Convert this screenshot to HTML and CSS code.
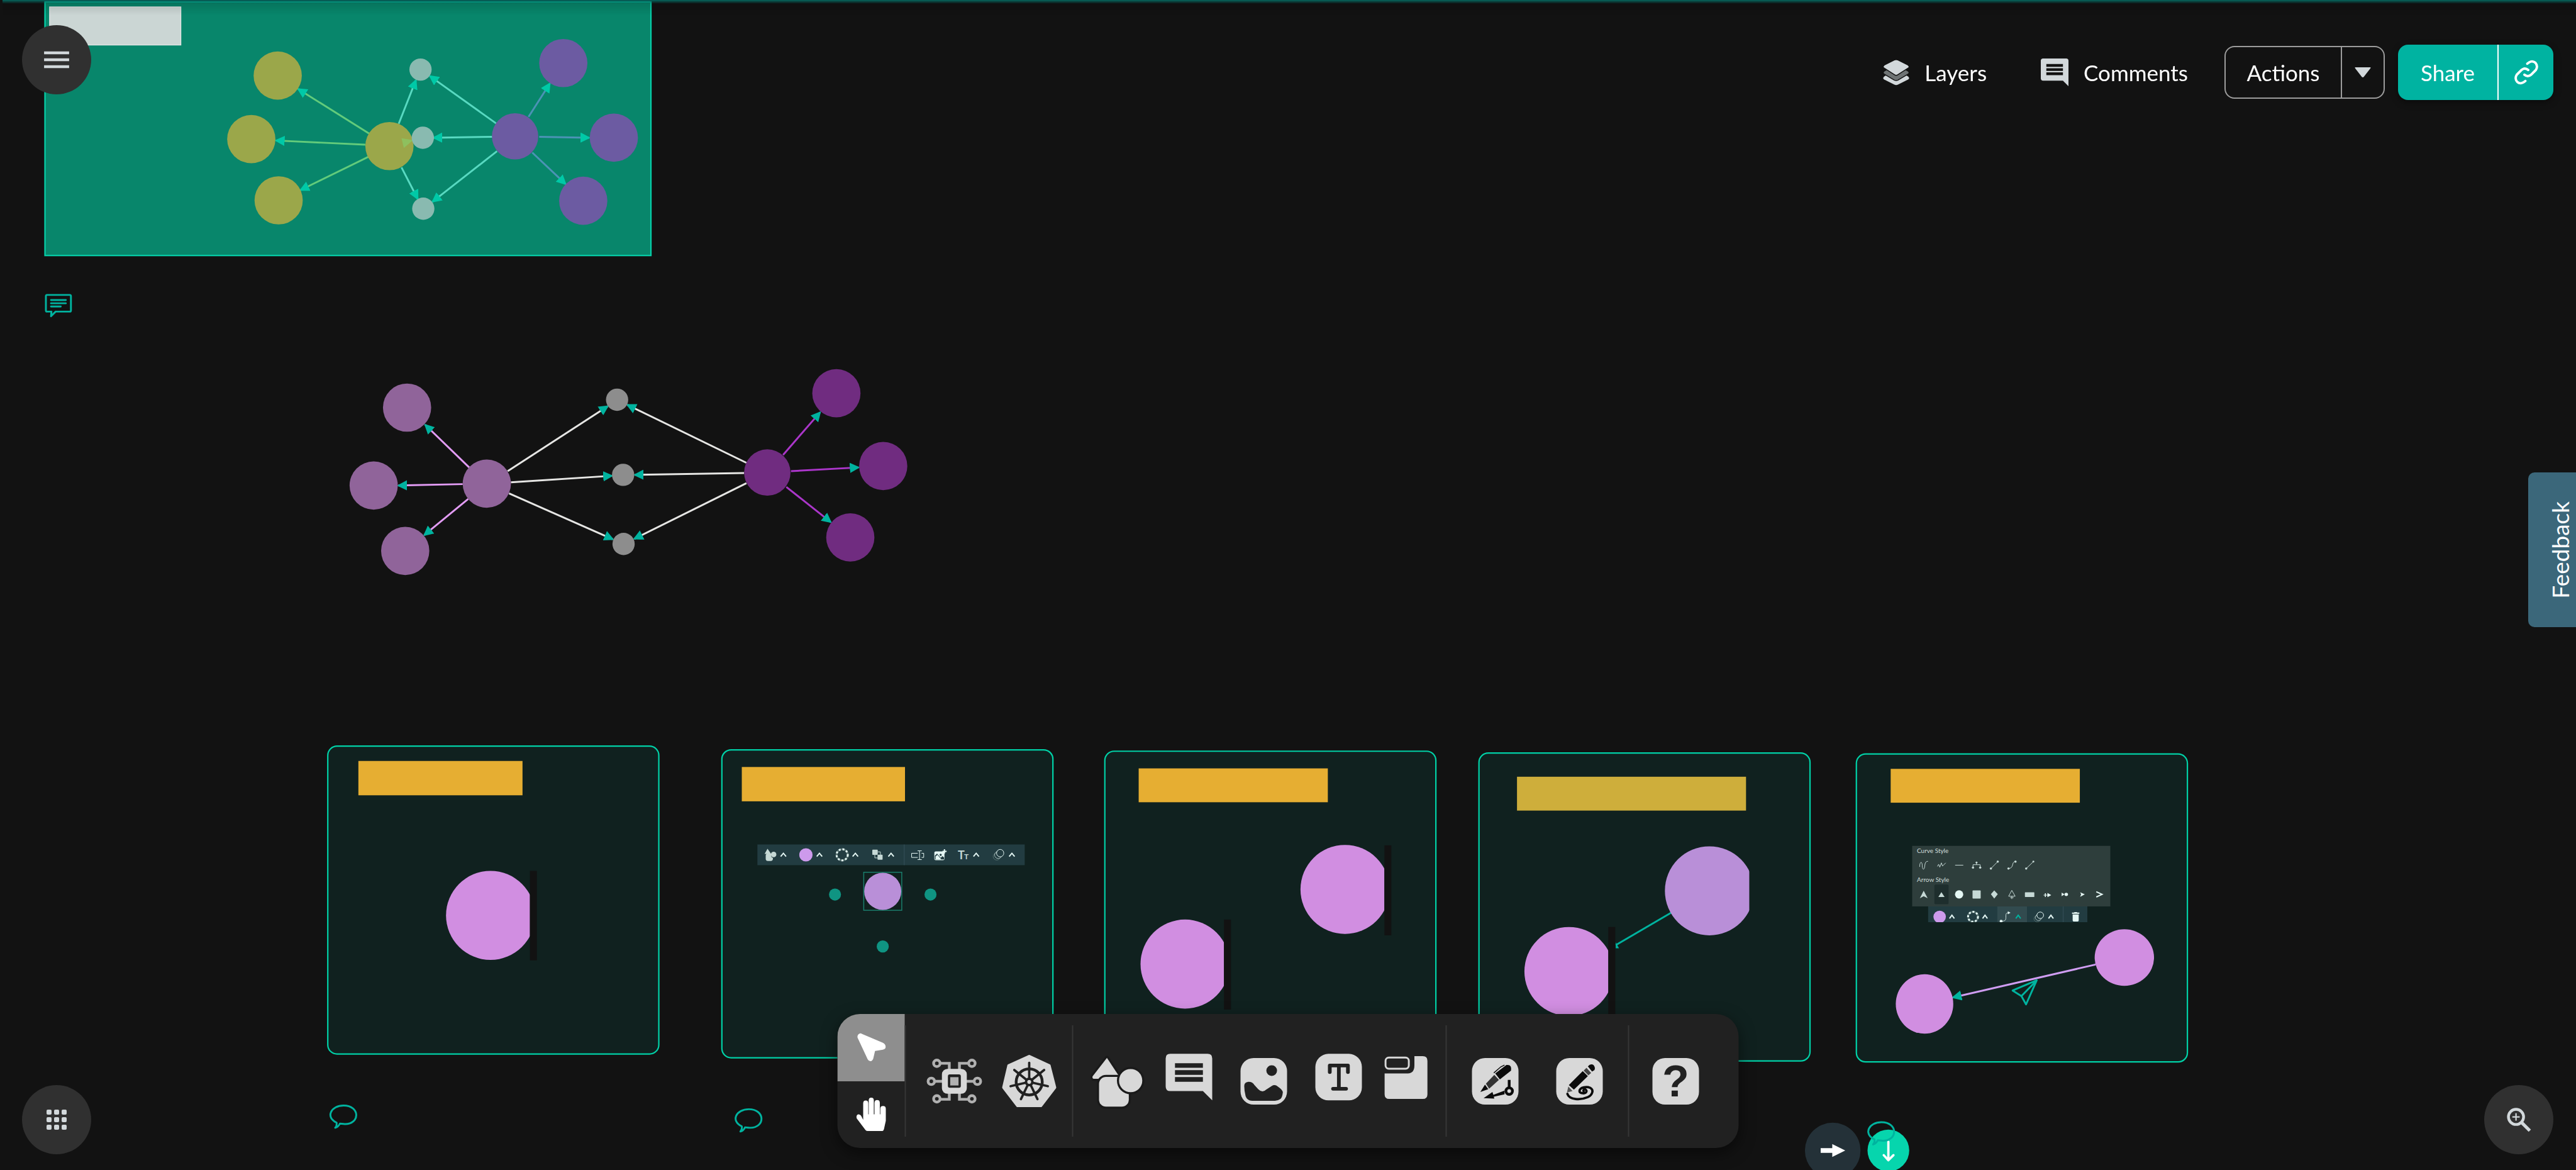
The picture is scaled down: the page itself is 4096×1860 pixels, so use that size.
FILE: index.html
```html
<!DOCTYPE html>
<html lang="en">
<head>
<meta charset="utf-8">
<title>Design canvas</title>
<link rel="stylesheet" href="styles.css">
</head>
<body>
<main class="board">
<svg class="canvas" role="img" aria-label="Design canvas">
  <defs>
    <marker id="head" markerUnits="userSpaceOnUse" markerWidth="22" markerHeight="22" refX="19" refY="11" orient="auto"><path class="teal-fill" d="M0 0L22 11L0 22Z"/></marker>
    <marker id="head-light" markerUnits="userSpaceOnUse" markerWidth="22" markerHeight="22" refX="19" refY="11" orient="auto"><path class="mint-fill" d="M0 0L22 11L0 22Z"/></marker>
    <path id="bubble" class="note" d="M-15 17C-40 5 -27 -20 0 -20C36 -20 36 20 3 20C-2 20 -5 19 -8 19Q-11 26 -18 28Q-14 24 -15 17Z"/>
    <path id="caret" class="glyph-line" d="M-15 11L0 -10L15 11"/>
    <clipPath id="clip1"><rect x="900" y="1800" width="243" height="400"/></clipPath>
    <clipPath id="clip3a"><rect x="2700" y="1800" width="286" height="400"/></clipPath>
    <clipPath id="clip3b"><rect x="2400" y="1900" width="240" height="400"/></clipPath>
    <clipPath id="clip4a"><rect x="3500" y="1800" width="273" height="400"/></clipPath>
    <clipPath id="clip4b"><rect x="3200" y="1900" width="269" height="400"/></clipPath>
    <clipPath id="clipbar"><rect x="286" y="464" width="998" height="102"/></clipPath>
  </defs>
  <g transform="scale(0.7372)">
    <!-- layered group, top left -->
    <rect class="group" x="97" y="4" width="1307" height="547"/>
    <rect class="label-light" x="107" y="15" width="283" height="82"/>
    <g class="edges lime">
      <path d="M796 288L643 192" marker-end="url(#head-light)"/><path d="M788 312L595 303" marker-end="url(#head-light)"/><path d="M795 338L648 410" marker-end="url(#head-light)"/>
    </g>
    <g class="edges aqua">
      <path d="M860 267L897 173" marker-end="url(#head-light)"/><path d="M866 361L901 429" marker-end="url(#head-light)"/>
      <path d="M1070 266L927 164" marker-end="url(#head-light)"/><path d="M1062 295L935 297" marker-end="url(#head-light)"/><path d="M1072 326L933 435" marker-end="url(#head-light)"/>
    </g>
    <g class="edges blue">
      <path d="M1140 252L1186 180" marker-end="url(#head-light)"/><path d="M1163 295L1271 297" marker-end="url(#head-light)"/><path d="M1148 329L1220 397" marker-end="url(#head-light)"/>
    </g>
    <g fill="#9ba74a"><circle cx="599" cy="163" r="52"/><circle cx="542" cy="300" r="52"/><circle cx="601" cy="432" r="52"/><circle cx="840" cy="315" r="52"/></g>
    <path d="M866 298L891 302L871 319Z" fill="#8ec05e"/>
    <g fill="#89bab0"><circle cx="907" cy="150" r="24"/><circle cx="912" cy="297" r="24"/><circle cx="913" cy="450" r="24"/></g>
    <g fill="#6c5ba2"><circle cx="1215" cy="136" r="52"/><circle cx="1324" cy="297" r="52"/><circle cx="1258" cy="433" r="52"/><circle cx="1111" cy="294" r="50"/></g>
    <!-- pinned comment -->
    <g class="note"><path d="M101 636H151Q153 636 153 639V669Q153 672 151 672H120L110 682L111 672H101Q99 672 99 669V639Q99 636 101 636Z"/><path d="M110 647H142M110 654H142M110 661H131"/></g>

    <!-- free graph -->
    <g class="edges pink"><path d="M1012 1008L917 916" marker-end="url(#head)"/><path d="M998 1044L859 1047" marker-end="url(#head)"/><path d="M1010 1076L915 1154" marker-end="url(#head)"/></g>
    <g class="edges white">
      <path d="M1095 1016L1311 876" marker-end="url(#head)"/><path d="M1102 1040L1320 1026" marker-end="url(#head)"/><path d="M1098 1064L1322 1163" marker-end="url(#head)"/>
      <path d="M1610 998L1353 873" marker-end="url(#head)"/><path d="M1605 1020L1369 1024" marker-end="url(#head)"/><path d="M1610 1042L1368 1162" marker-end="url(#head)"/>
    </g>
    <g class="edges violet"><path d="M1689 981L1769 889" marker-end="url(#head)"/><path d="M1706 1016L1852 1008" marker-end="url(#head)"/><path d="M1696 1050L1792 1126" marker-end="url(#head)"/></g>
    <g fill="#90649a"><circle cx="878" cy="879" r="52"/><circle cx="806" cy="1047" r="52"/><circle cx="874" cy="1188" r="52"/><circle cx="1050" cy="1043" r="52"/></g>
    <g fill="#8d8d8d"><circle cx="1331" cy="862" r="24"/><circle cx="1344" cy="1024" r="24"/><circle cx="1345" cy="1173" r="24"/></g>
    <g fill="#702c80"><circle cx="1804" cy="848" r="52"/><circle cx="1905" cy="1005" r="52"/><circle cx="1834" cy="1159" r="52"/><circle cx="1655" cy="1019" r="50"/></g>

    <!-- step cards -->
    <g class="card">
      <rect x="707" y="1609" width="714" height="664" rx="20"/><rect x="1557" y="1617" width="714" height="664" rx="20"/>
      <rect x="2383" y="1620" width="714" height="664" rx="20"/><rect x="3190" y="1624" width="714" height="664" rx="20"/>
      <rect x="4004" y="1626" width="714" height="664" rx="20"/>
    </g>
    <g fill="#e6ae32">
      <rect x="773" y="1641" width="354" height="74"/><rect x="1600" y="1654" width="352" height="74"/>
      <rect x="2456" y="1657" width="408" height="73"/><rect x="4078" y="1658" width="408" height="73"/>
    </g>
    <rect x="3272" y="1675" width="494" height="73" fill="#ceae3b"/>

    <circle class="orchid" cx="1058" cy="1974" r="96" clip-path="url(#clip1)"/><rect class="gap" x="1143" y="1878" width="15" height="193"/>
    <rect x="1863" y="1881" width="82" height="82" fill="none" stroke="#1b7f6d" stroke-width="2"/>
    <circle class="lilac" cx="1904" cy="1922" r="40"/>
    <g fill="#0f9482"><circle cx="1801" cy="1929" r="13"/><circle cx="2007" cy="1929" r="13"/><circle cx="1904" cy="2041" r="13"/></g>
    <circle class="orchid" cx="2901" cy="1918" r="96" clip-path="url(#clip3a)"/><rect class="gap" x="2986" y="1823" width="15" height="194"/>
    <circle class="orchid" cx="2556" cy="2079" r="96" clip-path="url(#clip3b)"/><rect class="gap" x="2640" y="1983" width="15" height="194"/>
    <path d="M3605 1968L3485 2038" stroke="#00b39f" stroke-width="4"/><path class="teal-fill" d="M3485 2032L3492 2045H3485Z"/>
    <circle class="lilac" cx="3687" cy="1921" r="96" clip-path="url(#clip4a)"/>
    <circle class="orchid" cx="3384" cy="2095" r="96" clip-path="url(#clip4b)"/><rect class="gap" x="3469" y="1999" width="15" height="194"/>
    <path d="M4520 2080L4212 2151" stroke="#cf9df2" stroke-width="4" marker-end="url(#head)"/>
    <ellipse class="orchid" cx="4151" cy="2165" rx="62" ry="64"/><ellipse class="orchid" cx="4582" cy="2065" rx="64" ry="61"/>
    <path class="note" d="M4341 2136L4393 2114L4370 2166L4360 2148ZM4360 2148L4393 2114"/>

    <use href="#bubble" x="741" y="2404"/><use href="#bubble" x="1615" y="2412"/>
    <circle cx="3953" cy="2481" r="60" fill="#243138"/><path d="M3927 2476H3952V2467L3980 2481L3952 2495V2486H3927Z" fill="#fff"/>
    <circle cx="4073" cy="2481" r="45" fill="#06d5ad"/>
    <path d="M4073 2462V2501M4063 2491L4073 2502L4084 2491" fill="none" stroke="#fff" stroke-width="5" stroke-linecap="round" stroke-linejoin="round"/>
    <use href="#bubble" x="4058" y="2440"/>
  </g>

  <!-- node style bar in the second card -->
  <g class="art" transform="translate(1194 1327) scale(0.2868 0.2457)">
    <rect x="36" y="63" width="1482" height="134" fill="#223c41"/>
    <path d="M850 63V197" stroke="#37505a" stroke-width="1"/>
    <g fill="#c6d9d6"><path d="M92 91L112 124H76Z"/><path d="M92 122H112Q110 148 122 150V158Q120 170 110 170H94Q82 170 82 156V136Q82 122 92 122Z"/><ellipse cx="126" cy="128" rx="15" ry="18"/></g>
    <ellipse cx="305" cy="130" rx="37" ry="43" fill="#cd9aec"/>
    <ellipse cx="506" cy="130" rx="31" ry="36" fill="none" stroke="#56706f" stroke-width="3"/>
    <ellipse cx="506" cy="130" rx="31" ry="36" fill="none" stroke="#e5f7f4" stroke-width="3" stroke-dasharray="3 3"/>
    <g fill="#c6d9d6"><rect x="673" y="97" width="30" height="33" rx="3"/><rect x="702" y="129" width="28" height="33" rx="3"/></g>
    <path class="glyph-line thin" d="M702 111H718V130M687 129V150H704"/>
    <path class="glyph-line rename" d="M925 120H891V147H925M946 120H958V147H946M924 104H947M924 161H947M935 104V161"/>
    <rect x="1017" y="108" width="56" height="57" rx="8" fill="#e5f7f4"/><path d="M1020 135L1032 122L1052 150L1062 138L1071 148V160H1020Z" fill="#223c41"/><path d="M1024 140L1034 130L1056 160H1024Z" fill="#e5f7f4"/><ellipse cx="1052" cy="130" rx="6" ry="7" fill="#223c41"/><path class="glyph-line" d="M1073 94V121M1062 108H1085"/>
    <g fill="none"><ellipse cx="1363" cy="141" rx="20" ry="23" stroke="#56706f" stroke-width="1"/><ellipse cx="1371" cy="131" rx="20" ry="23" stroke="#a5bab8" stroke-width="1"/><ellipse cx="1382" cy="119" rx="20" ry="24" stroke="#e5f7f4" stroke-width="1" fill="#223c41"/></g>
    <use href="#caret" x="180" y="130"/><use href="#caret" x="380" y="130"/><use href="#caret" x="579" y="130"/><use href="#caret" x="777" y="130"/><use href="#caret" x="1249" y="130"/><use href="#caret" x="1447" y="130"/>
  </g>
  <text class="type-big" x="1523" y="1366">T</text><text class="type-small" x="1533" y="1366">T</text>

  <!-- edge style panel in the fifth card -->
  <g class="art" transform="translate(2993 1327) scale(0.2539 0.2457)">
    <rect x="187" y="72" width="1241" height="392" fill="#2e3e3c"/>
    <g clip-path="url(#clipbar)">
      <rect x="286" y="464" width="998" height="102" fill="#223c41"/><rect x="720" y="464" width="186" height="102" fill="#324b4f"/>
      <path d="M1133 464V566" stroke="#37505a" stroke-width="1"/>
      <ellipse cx="359" cy="531" rx="39" ry="40" fill="#cd9aec"/>
      <ellipse cx="568" cy="531" rx="31" ry="32" fill="none" stroke="#56706f" stroke-width="3"/>
      <ellipse cx="568" cy="531" rx="31" ry="32" fill="none" stroke="#e5f7f4" stroke-width="3" stroke-dasharray="3 3"/>
      <path class="glyph-line thin" d="M744 559Q774 562 774 540V520Q774 505 790 505"/><path d="M786 496L803 505L786 515Z" fill="#e5f7f4"/><circle cx="744" cy="559" r="9" fill="#e5f7f4"/>
      <g fill="none"><circle cx="970" cy="544" r="20" stroke="#56706f" stroke-width="1"/><circle cx="978" cy="535" r="20" stroke="#a5bab8" stroke-width="1"/><circle cx="989" cy="521" r="21" stroke="#e5f7f4" stroke-width="1" fill="#223c41"/></g>
      <path d="M1188 504H1202V501H1220V504H1234V512H1188ZM1192 516H1230V555Q1230 562 1223 562H1199Q1192 562 1192 555Z" fill="#e5f7f4"/>
      <use href="#caret" x="436" y="531"/><use href="#caret" x="643" y="531"/><path d="M836 542L851 521L866 542" fill="none" stroke="#00b39f" stroke-width="2"/><use href="#caret" x="1056" y="531"/>
    </g>
    <rect x="326" y="323" width="89" height="127" rx="8" fill="#1e2e2d"/>
    <path class="glyph-line thin" d="M234 208C234 170 250 172 250 198C250 230 264 232 266 200Q268 170 286 172M345 205L353 191L360 210L370 182L377 203L397 182M456 197H507M568 213V194H613V213M590 194V180M680 219L723 174M790 219C828 216 806 174 834 174M901 219L946 174"/>
    <g fill="#c6d9d6"><circle cx="590" cy="180" r="6"/><circle cx="568" cy="213" r="7"/><circle cx="613" cy="213" r="7"/><circle cx="680" cy="219" r="7"/><circle cx="723" cy="174" r="7"/><circle cx="790" cy="219" r="7"/><circle cx="834" cy="174" r="7"/><circle cx="901" cy="219" r="7"/><circle cx="946" cy="174" r="6"/>
      <path d="M259 362L284 411L259 398L235 411ZM370 371L390 403H351ZM701 360L723 385L701 413L680 385Z"/><rect x="565" y="360" width="51" height="53" rx="4"/><rect x="893" y="372" width="59" height="31" rx="2"/></g>
    <path d="M811 360L832 398H791ZM811 398V416M801 407H822" fill="none" stroke="#c6d9d6" stroke-width="1"/>
    <g fill="#e5f7f4"><ellipse cx="481" cy="386" rx="26" ry="27"/><path d="M1034 376L1058 391L1034 404ZM1010 389H1034V393H1010ZM1018 379H1024V403H1018ZM1123 374L1141 386L1123 398ZM1239 372L1268 386L1239 402L1245 386Z"/><circle cx="1152" cy="386" r="11"/></g>
    <path class="glyph-line" d="M1340 369L1376 386L1340 403"/>
  </g>
  <text class="caption" x="3048" y="1356">Curve Style</text><text class="caption" x="3048" y="1402">Arrow Style</text>
</svg>
</main>

<div class="top-glow"></div>

<button class="fab fab-menu" aria-label="Menu"><svg width="40" height="28" viewBox="0 0 54 38"><path d="M0 4H54M0 19H54M0 34H54" stroke="#d2d8db" stroke-width="6"/></svg></button>

<header class="top-bar">
  <button class="plain layers"><svg width="42" height="42" viewBox="0 0 58 58">
    <path d="M3 38L29 22L55 38Q60 42 55 45L33 56Q29 58 25 56L3 45Q-2 42 3 38Z" fill="#d2d8db"/>
    <path d="M3 26L29 12L55 26Q60 30 55 33L33 46Q29 48 25 46L3 33Q-2 30 3 26Z" fill="#6e7374" stroke="#121212" stroke-width="2"/>
    <path d="M3 13L25 2Q29 0 33 2L55 13Q60 17 55 20L33 34Q29 37 25 34L3 20Q-2 17 3 13Z" fill="#d2d8db" stroke="#121212" stroke-width="2"/></svg>Layers</button>
  <button class="plain comments"><svg width="44" height="44" viewBox="0 0 60 60"><path d="M5 0H55Q60 0 60 5V60L48 48H5Q0 48 0 43V5Q0 0 5 0Z" fill="#d2d8db"/><path d="M12 15H48M12 24H48M12 33H48" stroke="#121212" stroke-width="6"/></svg>Comments</button>
  <div class="split outline">
    <button class="main-part">Actions</button>
    <button class="side-part" aria-label="More actions"><svg width="26" height="16" viewBox="0 0 34 21"><path d="M1 0H33Q34 1 33 2L19 20Q17 22 15 20L1 2Q0 1 1 0Z" fill="#d2d8db"/></svg></button>
  </div>
  <div class="split solid">
    <button class="main-part">Share</button>
    <button class="side-part" aria-label="Copy link"><svg width="38" height="38" viewBox="0 0 50 50" fill="none" stroke="#fff" stroke-width="5" stroke-linecap="round"><path d="M27 7L31 4Q38 0 44 5Q50 12 45 20L35 30Q28 36 21 30M23 43L19 46Q12 50 6 45Q0 38 5 30L15 20Q22 14 29 20"/></svg></button>
  </div>
</header>

<button class="feedback"><span>Feedback</span></button>

<nav class="tool-bar" aria-label="Tools">
  <div class="modes">
    <button class="active" aria-label="Select"><svg width="44" height="44" viewBox="0 0 60 60"><path d="M10 1L55 20Q61 23 61 29Q61 34 55 35L38 38L34 55Q32 60 28 60Q24 60 22 56L0 9Q-1 2 5 0Q7 -1 10 1Z" fill="#fff"/></svg></button>
    <button aria-label="Pan"><svg width="47" height="53" viewBox="0 0 64 72"><path d="M15 48V12Q15 6 20.500 6Q26 6 26 12V36H27V6Q27 0 32.500 0Q38 0 38 6V36H39.500V11Q40 5 45 5Q51 5 51 11V36H52V24Q52 18 58 18Q64 18 64 24V50L60 68Q59 72 57 72H24Q21 72 20 70L1 45Q-1 38 4 36Q9 36 11 40Z" fill="#fff"/></svg></button>
  </div>
  <div class="tools tools-infra">
    <button aria-label="Components"><svg width="88" height="72" viewBox="0 0 120 98">
      <g fill="none" stroke="#b0b0b0" stroke-width="6"><circle cx="22" cy="10" r="7"/><circle cx="98" cy="10" r="7"/><circle cx="10" cy="49" r="7"/><circle cx="110" cy="49" r="7"/><circle cx="22" cy="87" r="7"/><circle cx="98" cy="87" r="7"/><path d="M30 10H49V24M90 10H71V24M17 49H34M103 49H86M30 88H49V74M90 88H71V74"/></g>
      <rect x="33" y="22" width="54" height="54" rx="12" fill="#d8d8d8"/><rect x="46" y="34" width="28" height="29" rx="4" fill="#212121"/><rect x="51" y="40" width="18" height="18" fill="#b0b0b0"/></svg></button>
    <button aria-label="Kubernetes"><svg width="86" height="83" viewBox="0 0 116 112">
      <path d="M58 3L101 23L113 70L83 109H33L3 70L14 23Z" fill="#d8d8d8" stroke="#d8d8d8" stroke-width="6" stroke-linejoin="round"/>
      <g stroke="#212121" fill="none" stroke-linecap="round"><circle cx="58" cy="58" r="28" stroke-width="6"/>
      <g stroke-width="5"><path d="M58 52V17"/><path d="M58 52V17" transform="rotate(51.400 58 58)"/><path d="M58 52V17" transform="rotate(102.900 58 58)"/><path d="M58 52V17" transform="rotate(154.300 58 58)"/><path d="M58 52V17" transform="rotate(205.700 58 58)"/><path d="M58 52V17" transform="rotate(257.100 58 58)"/><path d="M58 52V17" transform="rotate(308.600 58 58)"/></g><circle cx="58" cy="58" r="7" stroke-width="5"/></g><circle cx="58" cy="58" r="4" fill="#d8d8d8"/></svg></button>
  </div>
  <div class="tools tools-shapes">
    <button class="narrow" aria-label="Shapes"><svg width="85" height="88" viewBox="0 0 115 119">
      <g fill="#d8d8d8" stroke="#1a1a1a" stroke-width="9" paint-order="stroke" stroke-linejoin="round"><path d="M36 9L63 50Q62 54 58 54H8Q4 54 5 49Z"/><rect x="19" y="50" width="64" height="64" rx="15"/><circle cx="87" cy="58" r="25"/></g></svg></button>
    <button aria-label="Comment"><svg width="74" height="74" viewBox="0 9 100 100"><path d="M10 0H90Q100 0 100 10V100L80 80H10Q0 80 0 70V10Q0 0 10 0Z" fill="#d8d8d8"/><path d="M20 25H80M20 40H80M20 55H80" stroke="#212121" stroke-width="10"/></svg></button>
    <button aria-label="Image"><svg width="74" height="74" viewBox="0 0 100 100"><rect width="100" height="100" rx="28" fill="#d8d8d8"/><circle cx="67" cy="27" r="11.500" fill="#212121"/><path d="M8 60Q8 52 17 51Q26 51 30 58L38 67Q47 76 55 68L67 60Q74 56 80 61Q90 68 91 73Q90 84 86 88Q80 92 74 92H25Q14 91 11 82Q8 70 8 60Z" fill="#212121"/></svg></button>
    <button aria-label="Text"><svg width="74" height="74" viewBox="0 9 100 100"><rect width="100" height="100" rx="28" fill="#d8d8d8"/><path d="M31 39V25H70V39M50.500 25V75M38 75H66" fill="none" stroke="#212121" stroke-width="8" stroke-linecap="round" stroke-linejoin="round"/></svg></button>
    <button aria-label="Section"><svg width="74" height="74" viewBox="12 4 100 100"><rect x="2" y="3" width="50" height="24" rx="7" fill="none" stroke="#d8d8d8" stroke-width="4"/><path d="M64 0H82Q92 0 92 10V82Q92 92 82 92H10Q0 92 0 82V37H50Q64 37 64 20Z" fill="#d8d8d8"/></svg></button>
  </div>
  <div class="tools tools-draw">
    <button aria-label="Pen"><svg width="74" height="74" viewBox="0 0 100 100"><rect width="100" height="100" rx="28" fill="#d8d8d8"/><g fill="#0b0b0b"><path d="M50 33L74 15Q86 13 84 27L60 46Z"/><path d="M48 36L58 47L37 66L30 55Z" fill="#333"/><path d="M28 57L35 67L18 73Z"/><path d="M25 86L44 73L46 79L70 70V78L47 83L48 87Z"/></g><path d="M47 32L62 19L70 15" fill="none" stroke="#0b0b0b" stroke-width="2"/><circle cx="80" cy="71" r="7" fill="none" stroke="#0b0b0b" stroke-width="6"/><path d="M80 47V63" stroke="#0b0b0b" stroke-width="6"/></svg></button>
    <button aria-label="Pencil"><svg width="74" height="74" viewBox="0 0 100 100"><rect width="100" height="100" rx="28" fill="#d8d8d8"/><g fill="#0b0b0b"><path d="M68 18Q74 11 80 15Q85 21 82 26L77 29Z"/><path d="M65 21L75 32L69 37L59 27Z" fill="#444"/><path d="M57 28L68 39L38 68L27 58Z"/><path d="M26 61L35 71L23 74Z" fill="#555"/></g><path d="M59 72C56 66 66 66 65 72C63 78 50 76 50 71C51 62 66 61 73 64C82 69 77 80 68 84C52 91 28 90 24 77" fill="none" stroke="#0b0b0b" stroke-width="5" stroke-linecap="round"/></svg></button>
  </div>
  <div class="tools tools-help">
    <button class="help" aria-label="Help">?</button>
  </div>
</nav>

<button class="fab fab-apps" aria-label="Apps"><svg width="32" height="32" viewBox="0 0 32 32" fill="#d2d8db"><rect width="8" height="8" rx="2"/><rect x="12" width="8" height="8" rx="2"/><rect x="24" width="8" height="8" rx="2"/><rect y="12" width="8" height="8" rx="2"/><rect x="12" y="12" width="8" height="8" rx="2"/><rect x="24" y="12" width="8" height="8" rx="2"/><rect y="24" width="8" height="8" rx="2"/><rect x="12" y="24" width="8" height="8" rx="2"/><rect x="24" y="24" width="8" height="8" rx="2"/></svg></button>
<button class="fab fab-zoom" aria-label="Zoom in"><svg width="38" height="38" viewBox="0 0 52 52" fill="none" stroke="#d2d8db"><circle cx="20" cy="20" r="16.500" stroke-width="6"/><path d="M33 33L50 50" stroke-width="7"/><path d="M12 20H28M20 12V28" stroke-width="3"/></svg></button>
</body>
</html>
```
FILE: styles.css
```css
* { box-sizing: border-box; }

body {
  margin: 0;
  height: 100vh;
  overflow: hidden;
  background: #121212;
  color: #fff;
  font-family: Lato, "Open Sans", sans-serif;
  font-size: 35px;
  line-height: 44px;
}

button {
  display: flex;
  align-items: center;
  justify-content: center;
  margin: 0;
  padding: 0;
  border: 0;
  background: none;
  color: inherit;
  font: inherit;
  cursor: pointer;
}

svg { display: block; overflow: visible; }

/* Canvas */
.board { height: 100%; }
.canvas { width: 100%; height: 100%; overflow: hidden; }
.group { fill: #08866b; stroke: #05d0a9; stroke-width: 3; }
.label-light { fill: #cbd6d4; stroke: #dfe3e2; stroke-width: 2; }
.edges { fill: none; stroke-width: 4; }
.lime { stroke: #62cb7b; }
.aqua { stroke: #58d9c1; }
.blue { stroke: #4b93b5; }
.pink { stroke: #e39cf5; }
.white { stroke: #e6e6e4; }
.violet { stroke: #ab36ca; }
.teal-fill { fill: #00b39f; }
.mint-fill { fill: #00c9a7; }
.card { fill: #10211f; stroke: #00d1a7; stroke-width: 3; }
.orchid { fill: #d18ee1; }
.lilac { fill: #b98fd8; }
.gap { fill: #121212; }
.note { fill: none; stroke: #00b39f; stroke-width: 4; stroke-linecap: round; stroke-linejoin: round; }
.glyph-line { fill: none; stroke: #e5f7f4; stroke-width: 2; vector-effect: non-scaling-stroke; }
.glyph-line.thin { stroke: #c6d9d6; stroke-width: 1; }
.glyph-line.rename { stroke-width: 1; }
.art path, .art ellipse, .art circle { vector-effect: non-scaling-stroke; }
.type-big { fill: #c6d9d6; font-size: 18px; font-weight: 700; }
.type-small { fill: #c6d9d6; font-size: 12px; font-weight: 700; }
.caption { fill: #d3dfdd; font-size: 10px; }

.top-glow {
  position: fixed;
  inset: 0 0 auto 4px;
  height: 24px;
  background:
    linear-gradient(#06665e, rgba(6, 102, 94, 0)) 0 0 / 100% 6px no-repeat,
    linear-gradient(rgba(0, 0, 0, 0.16), rgba(0, 0, 0, 0));
  pointer-events: none;
}

/* Round buttons in the corners */
.fab {
  position: fixed;
  width: 110px;
  height: 110px;
  border-radius: 50%;
  background: #303030;
}
.fab-menu { top: 40px; left: 35px; }
.fab-apps { bottom: 25px; left: 35px; }
.fab-zoom { bottom: 25px; right: 36px; }

/* Top right actions */
.top-bar {
  position: fixed;
  top: 71px;
  right: 36px;
  display: flex;
  align-items: center;
}
.plain { gap: 24px; }
.layers { margin-right: 86px; }
.comments { margin-right: 58px; }
.split { display: flex; border-radius: 16px; }
.outline { height: 84px; width: 255px; margin-right: 21px; border: 2px solid #9c9c9c; }
.outline .side-part { border-left: 2px solid #9c9c9c; width: 68px; }
.solid { height: 88px; width: 247px; background: #00b3a1; box-shadow: 0 4px 12px rgba(0, 0, 0, 0.4); }
.solid .side-part { border-left: 2px solid #fff; width: 89px; }
.main-part { flex: 1; }

.feedback {
  position: fixed;
  top: 751px;
  right: 0;
  width: 76px;
  height: 246px;
  padding-left: 26px;
  border-radius: 10px 0 0 10px;
  background: #3b677a;
  font-size: 37px;
}
.feedback span { writing-mode: vertical-rl; rotate: 180deg; }

/* Bottom tool bar */
.tool-bar {
  position: fixed;
  bottom: 35px;
  left: 50%;
  translate: -50% 0;
  display: flex;
  height: 213px;
  overflow: hidden;
  border-radius: 36px;
  background: #212121;
  box-shadow: 0 8px 24px rgba(0, 0, 0, 0.5);
}
.modes { display: grid; grid-template-rows: 1fr 1fr; width: 107px; }
.modes .active { background: #8e8e8e; }
.tools {
  display: flex;
  align-items: center;
  margin: 18px 0;
  border-left: 2px solid #363636;
}
.tools-infra { gap: 32px; padding: 0 25px 0 33px; }
.tools-shapes { gap: 45px; padding: 0 14px 0 27px; }
.tools-draw { gap: 60px; padding: 0 40px; }
.tools-help { padding: 0 63px 0 37px; }
.narrow { width: 75px; justify-content: flex-start; }
.help {
  width: 74px;
  height: 74px;
  border-radius: 20px;
  background: #d8d8d8;
  color: #212121;
  font: 700 70px/74px "Liberation Sans", sans-serif;
}
```
